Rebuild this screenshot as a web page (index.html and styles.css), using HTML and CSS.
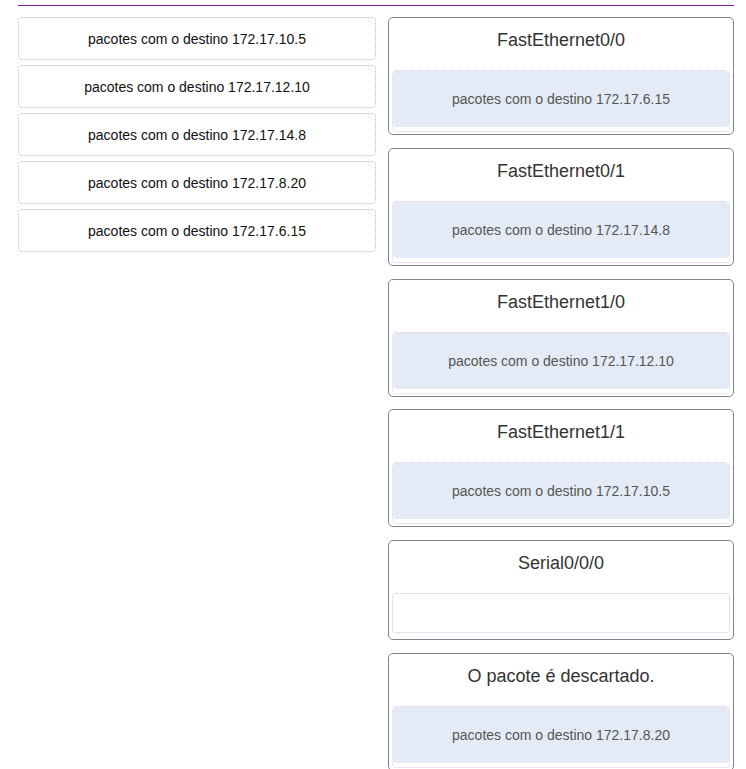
FILE: index.html
```html
<!DOCTYPE html>
<html lang="pt">
<head>
<meta charset="utf-8">
<title>Arrastar e soltar</title>
<link rel="stylesheet" href="styles.css">
</head>
<body>
<div class="page">
  <div class="rule"></div>
  <div class="columns">
    <div class="sources">
      <div class="chip">pacotes com o destino 172.17.10.5</div>
      <div class="chip">pacotes com o destino 172.17.12.10</div>
      <div class="chip">pacotes com o destino 172.17.14.8</div>
      <div class="chip">pacotes com o destino 172.17.8.20</div>
      <div class="chip">pacotes com o destino 172.17.6.15</div>
    </div>
    <div class="targets">
      <div class="target">
        <div class="target-title">FastEthernet0/0</div>
        <div class="drop"><div class="placed">pacotes com o destino 172.17.6.15</div></div>
      </div>
      <div class="target">
        <div class="target-title">FastEthernet0/1</div>
        <div class="drop"><div class="placed">pacotes com o destino 172.17.14.8</div></div>
      </div>
      <div class="target">
        <div class="target-title">FastEthernet1/0</div>
        <div class="drop"><div class="placed">pacotes com o destino 172.17.12.10</div></div>
      </div>
      <div class="target">
        <div class="target-title">FastEthernet1/1</div>
        <div class="drop"><div class="placed">pacotes com o destino 172.17.10.5</div></div>
      </div>
      <div class="target target-empty">
        <div class="target-title">Serial0/0/0</div>
        <div class="drop drop-empty"></div>
      </div>
      <div class="target">
        <div class="target-title">O pacote é descartado.</div>
        <div class="drop"><div class="placed">pacotes com o destino 172.17.8.20</div></div>
      </div>
    </div>
  </div>
</div>
</body>
</html>
```
FILE: styles.css
```css
html, body {
  margin: 0;
  padding: 0;
  background: #ffffff;
}
body {
  font-family: "Liberation Sans", Arial, sans-serif;
  font-size: 14px;
  color: #222;
}
.page {
  padding: 5px 12px 0 18px;
}
.rule {
  height: 1px;
  background: #7b1fa2;
}
.columns {
  display: grid;
  grid-template-columns: 358px 346px;
  column-gap: 12px;
  align-items: start;
  margin-top: 11px;
}
.sources {
  display: flex;
  flex-direction: column;
  gap: 5px;
}
.chip {
  height: 41px;
  border: 1px dotted #a9c1dc;
  border-radius: 4px;
  display: flex;
  align-items: center;
  justify-content: center;
  color: #111;
  background: #fff;
}
.targets {
  display: flex;
  flex-direction: column;
  gap: 12.75px;
}
.target {
  border: 1px solid #7f848b;
  border-radius: 5px;
  padding: 0 3px 2px;
}
.target-empty {
  padding-bottom: 6px;
}
.target-title {
  padding: 9px 0 16px;
  line-height: 27px;
  font-size: 18px;
  text-align: center;
  color: #333;
}
.drop {
  border: 1px dotted #d9c6ec;
  border-radius: 4px;
  padding-bottom: 4px;
}
.drop-empty {
  min-height: 38px;
  padding: 0;
  border-color: #c4c4e4;
}
.placed {
  height: 56px;
  background: #e4ebf6;
  border-radius: 4px;
  display: flex;
  align-items: center;
  justify-content: center;
  color: #555;
}
```
